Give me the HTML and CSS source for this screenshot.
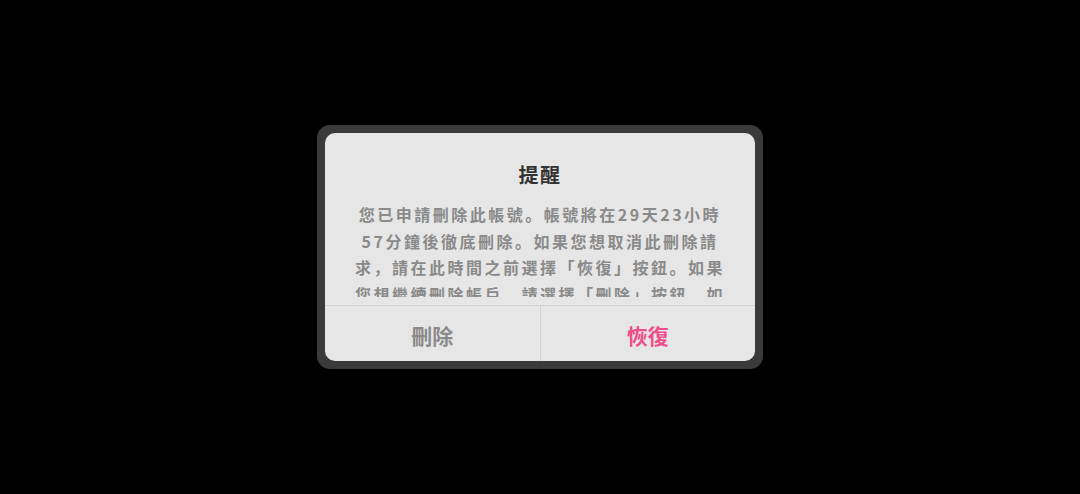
FILE: index.html
```html
<!DOCTYPE html>
<html lang="zh-Hant">
<head>
<meta charset="utf-8">
<title>提醒</title>
<link rel="stylesheet" href="styles.css">
</head>
<body>
<div class="stage">
  <div class="frame">
    <div class="panel">
      <div class="content">
        <h1 class="title">提醒</h1>
        <div class="scroll">
          <p class="message">您已申請刪除此帳號。帳號將在29天23小時57分鐘後徹底刪除。如果您想取消此刪除請求，請在此時間之前選擇「恢復」按鈕。如果您想繼續刪除帳戶，請選擇「刪除」按鈕。如果您在此期間未進行任何操作，帳號將在期限結束後自動刪除。</p>
        </div>
      </div>
      <div class="actions">
        <button class="btn btn-delete">刪除</button>
        <button class="btn btn-restore">恢復</button>
      </div>
    </div>
  </div>
</div>
</body>
</html>
```

FILE: styles.css
```css
html, body {
  margin: 0;
  padding: 0;
  background: #000;
}
body {
  font-family: "Noto Sans CJK SC", "Noto Sans", sans-serif;
  font-feature-settings: "locl" 0;
}
.stage {
  width: 1080px;
  height: 494px;
  display: flex;
  align-items: center;
  justify-content: center;
}
.frame {
  width: 430px;
  height: 228px;
  padding: 8px;
  background: #3b3b3b;
  border-radius: 13px;
}
.panel {
  width: 100%;
  height: 100%;
  background: #e6e6e6;
  border-radius: 10px;
  overflow: hidden;
  display: flex;
  flex-direction: column;
}
.content {
  height: 173px;
  box-sizing: border-box;
  padding-top: 28px;
  display: flex;
  flex-direction: column;
  align-items: center;
  border-bottom: 1px solid #d3d3d3;
}
.title {
  margin: 0;
  font-size: 20px;
  line-height: 28px;
  font-weight: 700;
  letter-spacing: 1.5px;
  color: #333;
}
.scroll {
  margin-top: 12px;
  height: 96px;
  overflow: hidden;
  width: 372px;
}
.message {
  margin: 0;
  font-size: 16px;
  line-height: 26.5px;
  letter-spacing: 2.5px;
  font-weight: 700;
  color: #8a8a8a;
  text-align: center;
  font-feature-settings: "locl" 0;
}
.actions {
  flex: 1;
  display: flex;
}
.btn {
  flex: 1;
  border: 0;
  margin: 0;
  padding: 2px 0 0;
  background: transparent;
  font-family: "Noto Sans CJK SC", "Noto Sans", sans-serif;
  font-feature-settings: "locl" 0;
  font-size: 21px;
  font-weight: 700;
}
.btn-delete {
  color: #8a8a8a;
  border-right: 1px solid #d3d3d3;
}
.btn-restore {
  color: #ee4e8b;
}
```
